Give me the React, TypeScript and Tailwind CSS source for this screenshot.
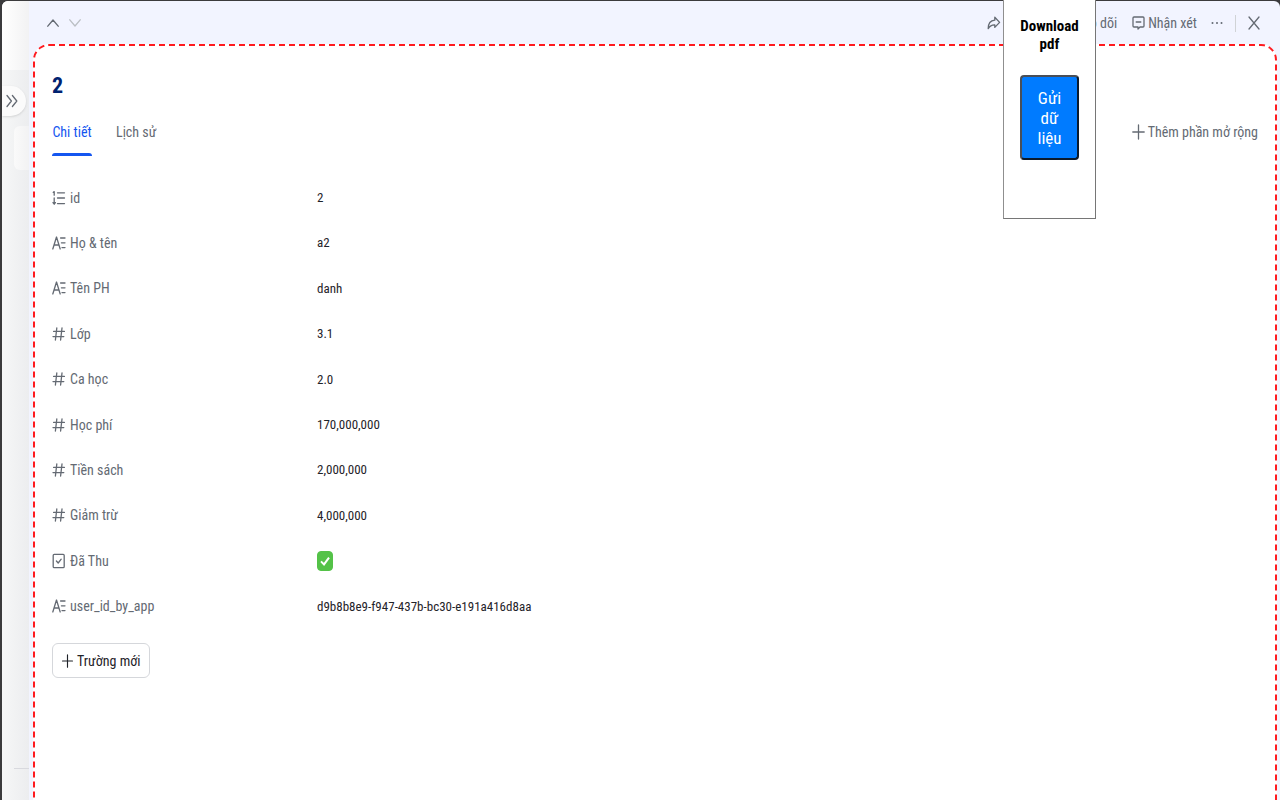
import React, { useState } from 'react';

type FieldType = 'auto' | 'text' | 'number' | 'checkbox';

interface Field {
    type: FieldType;
    label: string;
    value?: string;
}

const fields: Field[] = [
    { type: 'auto', label: 'id', value: '2' },
    { type: 'text', label: 'Họ & tên', value: 'a2' },
    { type: 'text', label: 'Tên PH', value: 'danh' },
    { type: 'number', label: 'Lớp', value: '3.1' },
    { type: 'number', label: 'Ca học', value: '2.0' },
    { type: 'number', label: 'Học phí', value: '170,000,000' },
    { type: 'number', label: 'Tiền sách', value: '2,000,000' },
    { type: 'number', label: 'Giảm trừ', value: '4,000,000' },
    { type: 'checkbox', label: 'Đã Thu' },
    { type: 'text', label: 'user_id_by_app', value: 'd9b8b8e9-f947-437b-bc30-e191a416d8aa' },
];

// --- ICONS ---
interface IconProps {
    d: string;
    className: string;
    viewBox: string;
}

const Icon: React.FC<IconProps> = ({ d, className, viewBox }) => (
    <svg viewBox={viewBox} className={`shrink-0 ${className}`} fill="none" stroke="currentColor" strokeWidth="1.3" strokeLinecap="round" strokeLinejoin="round" aria-hidden="true">
        <path d={d} />
    </svg>
);

const fieldIcons: Record<FieldType, string> = {
    auto: 'M1.2 2.4L2.2 1.6V5.2M2.2 8V14M1 12.6L2.2 14.2L3.4 12.6M5.5 2.8H12.5M5.5 8H12.5M5.5 13.6H12.5',
    text: 'M.8 14L4.5 2L8.2 14M2 10H7M8.6 3H13M9.4 7.8H13M10 12.6H13',
    number: 'M4.8 2L3.4 14M10 2L8.6 14M1.6 5.4H12.4M1 10.6H11.8',
    checkbox: 'M2.2 1.4H11.2Q12.2 1.4 12.2 2.6V13.4Q12.2 14.6 11.2 14.6H2.2Q1.2 14.6 1.2 13.4V2.6Q1.2 1.4 2.2 1.4M4.4 8L6.2 10L9.2 6.2',
};

const PLUS = 'M6.5 1V15M.8 8H12.2';

// --- LEFT STRIP ---
const Sidebar = () => (
    <aside className="relative w-[27px] shrink-0 flex flex-col rounded-tl-md bg-linear-to-r from-[#f6f7f7] to-[#ecedef]">
        <div className="h-[69px] rounded-tl-md bg-linear-to-r from-white to-[#f2f2f3]" />
        <div className="mt-14 ml-3 h-11 rounded-l-md bg-linear-to-r from-[#fafafa] to-[#f2f2f3]" />
        <div className="mt-auto mb-[31px] ml-3 h-px bg-[#d8d9de]" />
        <button type="button" aria-label="Mở rộng" className="absolute top-[85px] left-0 w-6 h-[30px] pl-1 flex items-center rounded-r-full bg-[#fbfbfb] text-[#646a73] shadow">
            <Icon viewBox="0 0 12 14" className="w-3 h-3.5" d="M1 1.5L5.4 7L1 12.5M6.4 1.5L10.8 7L6.4 12.5" />
        </button>
    </aside>
);

const TopBar = () => (
    <header className="h-[43px] shrink-0 flex items-center justify-between pl-[18px] pr-5 pt-px text-sm text-[#646a73]">
        <div className="flex items-center gap-2.5">
            <button type="button" aria-label="Bản ghi trước">
                <Icon viewBox="0 0 12 8" className="w-3 h-2" d="M.8 7.2L6 1L11.2 7.2" />
            </button>
            <button type="button" aria-label="Bản ghi sau" className="text-[#bbbfc4]">
                <Icon viewBox="0 0 12 8" className="w-3 h-2" d="M.8 .8L6 7L11.2 .8" />
            </button>
        </div>
        <div className="flex items-center">
            <button type="button" aria-label="Chia sẻ" className="mr-[89px]">
                <Icon viewBox="0 0 14 16" className="w-3.5 h-4" d="M7.8 2.2L12.6 7.4L7.8 12.4V9.8C4.6 9.6 2.8 11 1.2 13.6C1.2 9 3.4 5.6 7.8 5.2Z" />
            </button>
            <button type="button" aria-label="Theo dõi" className="mr-[15px]">o dõi</button>
            <button type="button" className="flex items-center gap-[3px] mr-3.5">
                <Icon viewBox="0 0 13 16" className="w-[13px] h-4" d="M2 2H11Q12 2 12 3V11Q12 12 11 12H8L6 14V12H2Q1 12 1 11V3Q1 2 2 2M4.2 7H8.8" />
                Nhận xét
            </button>
            <button type="button" aria-label="Thêm" className="mr-3">
                <svg viewBox="0 0 12 4" className="w-3 h-1" fill="currentColor" aria-hidden="true">
                    <circle cx="1.5" cy="2" r="1" />
                    <circle cx="6" cy="2" r="1" />
                    <circle cx="10.5" cy="2" r="1" />
                </svg>
            </button>
            <div className="w-px h-[17px] mr-3 bg-[#d0d3d6]" />
            <button type="button" aria-label="Đóng">
                <Icon viewBox="0 0 12 14" className="w-3 h-3.5" d="M1 1L11 13M11 1L1 13" />
            </button>
        </div>
    </header>
);

const FieldRow: React.FC<{ field: Field }> = ({ field }) => {
    const [checked, setChecked] = useState(true);
    const isCheckbox = field.type === 'checkbox';

    return (
        <div className="flex items-center">
            <dt className="w-[265px] shrink-0 flex items-center gap-1 text-sm text-[#646a73]">
                <Icon viewBox="0 0 14 16" className="w-3.5 h-4" d={fieldIcons[field.type]} />
                {isCheckbox ? <label htmlFor="paid">{field.label}</label> : field.label}
            </dt>
            <dd className="text-[13px] text-[#1f2329]">
                {isCheckbox ? (
                    <span className="grid">
                        <input
                            id="paid"
                            type="checkbox"
                            checked={checked}
                            onChange={e => setChecked(e.target.checked)}
                            className="col-start-1 row-start-1 appearance-none w-4 h-5 rounded border border-[#54c248] checked:bg-[#54c248]"
                        />
                        {checked && (
                            <svg viewBox="0 0 16 20" className="col-start-1 row-start-1 w-4 h-5 pointer-events-none" fill="none" stroke="white" strokeWidth="2" aria-hidden="true">
                                <path d="M4 10.4L7 13.4L12 6.6" />
                            </svg>
                        )}
                    </span>
                ) : field.value}
            </dd>
        </div>
    );
};

const DownloadPopup = () => (
    <div className="absolute top-0 right-[184px] w-[93px] h-[219px] flex flex-col items-center px-4 pt-[17px] bg-white border border-t-0 border-[#767676] border-l-[#8f8f8f]">
        <h3 className="text-[15px] leading-[18px] font-bold text-center text-black">Download pdf</h3>
        <button type="button" className="mt-[22px] w-[59px] h-[85px] px-3 rounded border-2 border-t-[#4a4f57] border-l-[#4a4f57] border-r-[#0b1a2c] border-b-[#0b1a2c] bg-[#007bff] text-[17px] leading-5 text-white">
            Gửi dữ liệu
        </button>
    </div>
);

const App = () => {
    const [tab, setTab] = useState('details');

    return (
        <div className="relative min-h-screen flex overflow-hidden bg-[#3b3b3d] pl-0.5 pt-px font-['Roboto_Condensed','Roboto',sans-serif]">
            <Sidebar />
            <div className="flex-1 flex flex-col rounded-tr-md bg-[#f2f4ff]">
                <TopBar />
                <main className="flex-1 ml-1 mr-[3px] px-[17px] pb-8 rounded-t-2xl border-2 border-b-0 border-dashed border-[#ff1a1f] bg-white">
                    <h1 className="mt-6 text-[22px] leading-8 font-bold text-[#002270]">2</h1>

                    <div className="mt-3 flex items-start justify-between text-sm">
                        <div role="tablist" className="flex gap-6">
                            <button
                                type="button"
                                role="tab"
                                aria-selected={tab === 'details'}
                                onClick={() => setTab('details')}
                                className="h-[42px] flex flex-col justify-between pt-2 text-[#1456f0]"
                            >
                                Chi tiết
                                <span className="w-10 h-[3px] rounded-t-full bg-[#1456f0]" />
                            </button>
                            <button
                                type="button"
                                role="tab"
                                aria-selected={tab === 'history'}
                                onClick={() => setTab('history')}
                                className="h-[42px] flex items-start pt-2 text-[#646a73]"
                            >
                                Lịch sử
                            </button>
                        </div>
                        <button type="button" className="flex items-center gap-[3px] pt-2 text-[#646a73]">
                            <Icon viewBox="0 0 13 16" className="w-[13px] h-4" d={PLUS} />
                            Thêm phần mở rộng
                        </button>
                    </div>

                    <dl className="mt-[19px] min-h-[454px] grid auto-rows-fr">
                        {fields.map(field => <FieldRow key={field.label} field={field} />)}
                    </dl>

                    <button type="button" className="mt-3.5 h-[35px] flex items-center gap-[3px] px-2 rounded-md border border-[#d5d7db] bg-white text-sm text-[#1f2329]">
                        <Icon viewBox="0 0 13 16" className="w-[13px] h-3.5" d={PLUS} />
                        Trường mới
                    </button>
                </main>
            </div>
            <DownloadPopup />
        </div>
    );
};

export default App;
